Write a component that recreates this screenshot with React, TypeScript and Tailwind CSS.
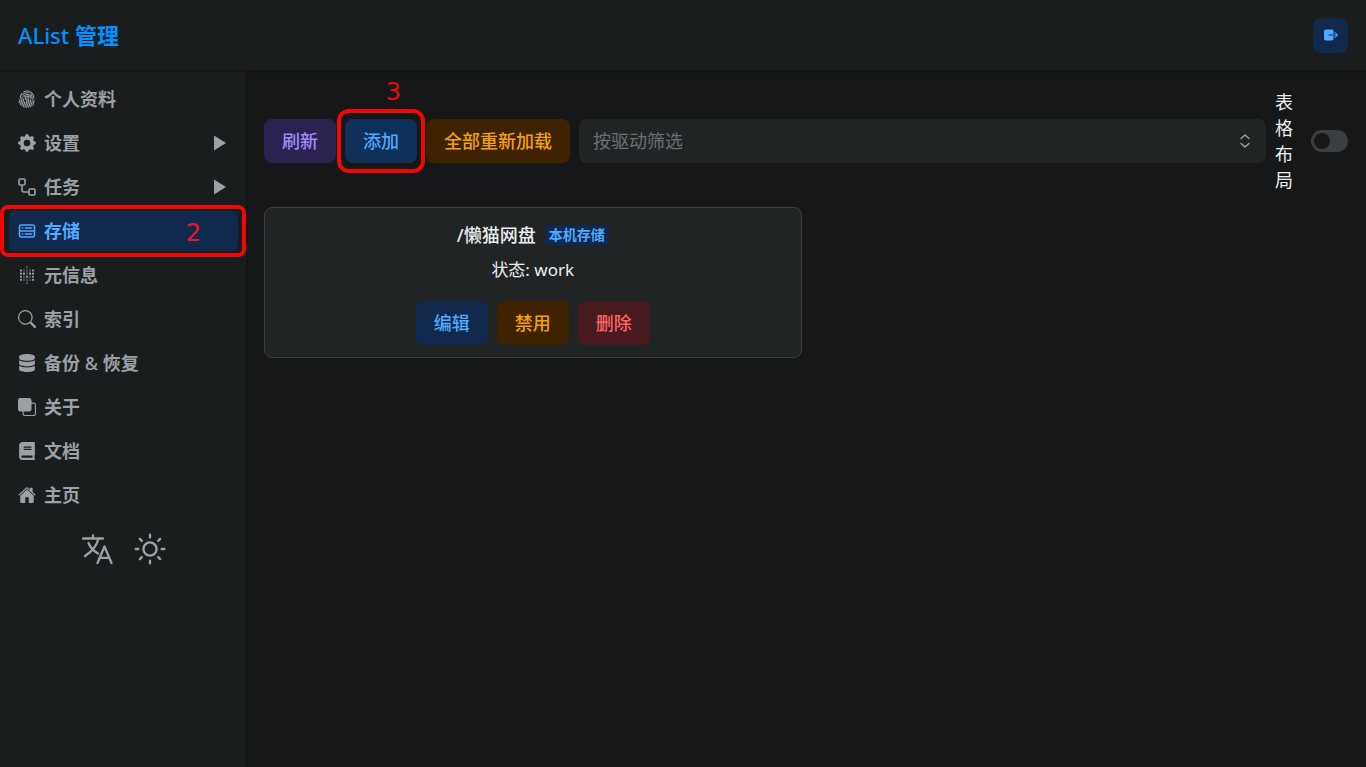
import { useState } from "react";
import type { ComponentType, ReactNode, SVGProps } from "react";
import { BsFingerprint, BsFront, BsGearFill, BsSearch } from "react-icons/bs";
import { CgDatabase } from "react-icons/cg";
import { FaBook, FaDatabase } from "react-icons/fa";
import { IoExit, IoHome } from "react-icons/io5";
import { SiMetabase } from "react-icons/si";

const WorkflowIcon = (props: SVGProps<SVGSVGElement>) => (
  <svg viewBox="0 0 18 18" fill="none" stroke="currentColor" strokeWidth="1.6" aria-hidden="true" {...props}>
    <rect x="1" y="1" width="6" height="6" rx="1" />
    <rect x="11" y="11" width="6" height="6" rx="1" />
    <path d="M4 7v5a2 2 0 0 0 2 2h5" />
  </svg>
);

const TranslateIcon = (props: SVGProps<SVGSVGElement>) => (
  <svg
    viewBox="0 0 32 32"
    fill="none"
    stroke="currentColor"
    strokeWidth="2.3"
    strokeLinecap="round"
    strokeLinejoin="round"
    aria-hidden="true"
    {...props}
  >
    <path d="M2 5.5h20M12 2.5v3M17.5 5.5c-1.6 7-6.500 13-13.500 17.500M7.500 10c1.800 4.500 5 8 9.500 10.500" />
    <path d="M16.500 30 23.500 13.500 30.500 30M18.800 24.800h9.400" />
  </svg>
);

const SunIcon = (props: SVGProps<SVGSVGElement>) => (
  <svg
    viewBox="0 0 32 32"
    fill="none"
    stroke="currentColor"
    strokeWidth="2.4"
    strokeLinecap="round"
    aria-hidden="true"
    {...props}
  >
    <circle cx="16" cy="16" r="6.600" />
    <path d="M16 1.700v2.600M16 27.700v2.600M1.700 16h2.600M27.700 16h2.600M5.900 5.900l1.900 1.900M24.200 24.200l1.900 1.900M5.900 26.100l1.900-1.900M24.200 7.800l1.900-1.900" />
  </svg>
);

type MenuItem = {
  label: ReactNode;
  href: string;
  icon: ComponentType<{ className?: string }>;
  expandable?: boolean;
  step?: string;
};

const menuItems: MenuItem[] = [
  { label: "个人资料", href: "#profile", icon: BsFingerprint },
  { label: "设置", href: "#settings", icon: BsGearFill, expandable: true },
  { label: "任务", href: "#tasks", icon: WorkflowIcon, expandable: true },
  { label: "存储", href: "#storages", icon: CgDatabase, step: "2" },
  { label: "元信息", href: "#metas", icon: SiMetabase },
  { label: "索引", href: "#indexes", icon: BsSearch },
  {
    label: (
      <>
        备份 <span className="font-medium">&amp;</span> 恢复
      </>
    ),
    href: "#backup",
    icon: FaDatabase,
  },
  { label: "关于", href: "#about", icon: BsFront },
  { label: "文档", href: "#docs", icon: FaBook },
  { label: "主页", href: "#home", icon: IoHome },
];

const SideMenu = ({ active }: { active: string }) => (
  <nav className="flex flex-col gap-1">
    {menuItems.map(({ label, href, icon: Icon, expandable, step }) => (
      <a
        key={href}
        href={href}
        className={`relative flex h-10 items-center gap-2 rounded-md px-[9px] text-lg font-bold ${
          href === active ? "bg-[#10294c] text-[#52a9ff]" : "text-[#9ba1a6]"
        }`}
      >
        <Icon className="size-[18px]" />
        <span className="grow">{label}</span>
        {expandable && (
          <svg viewBox="0 0 12 16" className="mr-[3px] h-4 w-3" fill="currentColor" aria-hidden="true">
            <path d="M0 0.5 12 8 0 15.5Z" />
          </svg>
        )}
        {step && (
          <>
            <span className="absolute -inset-y-1.5 -right-2 -left-[9px] rounded-lg border-4 border-[#f00808]" />
            <span className="mr-7 pt-1 font-[DejaVu_Sans] text-2xl font-normal text-[#f01428]">{step}</span>
          </>
        )}
      </a>
    ))}
  </nav>
);

const buttonBase = "h-11 shrink-0 whitespace-nowrap rounded-lg px-[18px] text-lg font-medium";

export default function App() {
  const [driver, setDriver] = useState("");
  const [tableLayout, setTableLayout] = useState(false);

  return (
    <div className="flex min-h-screen flex-col bg-[#161718] font-['Noto_Sans','Noto_Sans_CJK_SC',sans-serif] text-[#ecedee]">
      <header className="z-10 flex h-[70px] items-center justify-between bg-[#1a1d1e] px-[18px] shadow-[0_1px_3px_rgba(0,0,0,0.35)]">
        <h1 className="text-[22px] font-bold text-[#0091ff]">
          <span className="font-medium">AList</span> 管理
        </h1>
        <button
          type="button"
          aria-label="退出登录"
          className="flex size-[35px] items-center justify-center rounded-lg bg-[#10294c] text-[#52a9ff]"
        >
          <IoExit className="size-4" />
        </button>
      </header>

      <div className="flex grow">
        <aside className="w-[246px] shrink-0 bg-[#1a1d1e] pt-[9px] pr-2 pl-[9px] shadow-[1px_0_2px_rgba(0,0,0,0.2)]">
          <SideMenu active="#storages" />
          <div className="mt-[18px] flex justify-center gap-[21px] text-[#9ba1a6]">
            <button type="button" aria-label="切换语言">
              <TranslateIcon className="size-8" />
            </button>
            <button type="button" aria-label="切换主题">
              <SunIcon className="size-8" />
            </button>
          </div>
        </aside>

        <main className="min-w-0 grow px-[18px] pt-[19px]">
          <div className="flex items-center gap-[9px]">
            <button type="button" className={`${buttonBase} bg-[#2c2250] text-[#9e8cfc]`}>
              刷新
            </button>
            <div className="relative shrink-0">
              <button type="button" className={`${buttonBase} bg-[#0f3058] text-[#52a9ff]`}>
                添加
              </button>
              <span className="pointer-events-none absolute -inset-x-2 -inset-y-2.5 rounded-xl border-4 border-[#f00808]" />
              <span className="absolute -top-11 right-4 pt-px font-[DejaVu_Sans] text-2xl text-[#f00808]">3</span>
            </div>
            <button type="button" className={`${buttonBase} bg-[#3f2200] text-[#f1a10d]`}>
              全部重新加载
            </button>
            <div className="relative min-w-0 grow">
              <select
                aria-label="按驱动筛选"
                value={driver}
                onChange={(event) => setDriver(event.target.value)}
                className="h-11 w-full appearance-none rounded-lg bg-[#202425] px-[14px] text-lg text-[#697177] outline-none"
              >
                <option value="">按驱动筛选</option>
                <option value="Local">本机存储</option>
              </select>
              <svg
                viewBox="0 0 12 16"
                className="pointer-events-none absolute top-1/2 right-[15px] h-4 w-3 -translate-y-1/2 text-[#9ba1a6]"
                fill="none"
                stroke="currentColor"
                strokeWidth="1.4"
                strokeLinecap="round"
                strokeLinejoin="round"
                aria-hidden="true"
              >
                <path d="M2 5.5 6 2l4 3.5M2 10.5 6 14l4-3.5" />
              </svg>
            </div>
            <label className="flex shrink-0 items-center gap-[18px] text-lg leading-[26px]">
              <span className="w-[18px] break-all">表格布局</span>
              <input
                type="checkbox"
                role="switch"
                checked={tableLayout}
                onChange={(event) => setTableLayout(event.target.checked)}
                className="h-[22px] w-[37px] appearance-none rounded-full bg-[#3a3f42] before:m-[3px] before:block before:size-4 before:rounded-full before:bg-[#161718] checked:bg-[#0091ff] checked:before:ml-[18px]"
              />
            </label>
          </div>

          <div className="mt-[14px] grid grid-cols-2 gap-[9px]">
            <section className="flex flex-col items-center gap-[9px] rounded-lg border border-[#3a3f42] bg-[#202425] px-3 pt-[14px] pb-3">
              <div className="flex items-center gap-[9px]">
                <h2 className="text-lg leading-[26px] font-medium">/懒猫网盘</h2>
                <span className="rounded-sm bg-[#10294c] px-1 text-sm font-semibold text-[#52a9ff]">本机存储</span>
              </div>
              <p className="text-[17px] leading-[26px]">状态: work</p>
              <div className="mt-[9px] flex gap-[9px]">
                <button type="button" className={`${buttonBase} bg-[#10294c] text-[#52a9ff]`}>
                  编辑
                </button>
                <button type="button" className={`${buttonBase} bg-[#3f2200] text-[#f1a10d]`}>
                  禁用
                </button>
                <button type="button" className={`${buttonBase} bg-[#481a1d] text-[#ff6369]`}>
                  删除
                </button>
              </div>
            </section>
          </div>
        </main>
      </div>
    </div>
  );
}
